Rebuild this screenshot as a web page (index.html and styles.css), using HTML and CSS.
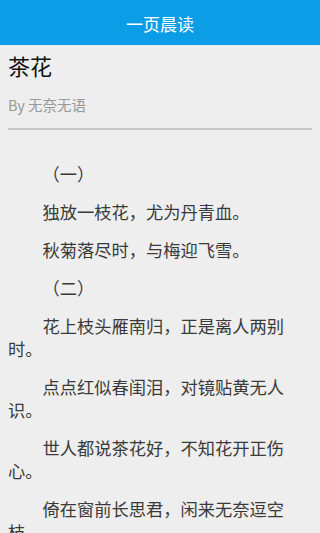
FILE: index.html
```html
<!DOCTYPE html>
<html lang="zh">
  <head>
    <meta charset="UTF-8" />
    <meta name="viewport" content="width=device-width, initial-scale=1.0" />
    <title>一页晨读</title>
    <link rel="stylesheet" href="styles.css">
  </head>
  <body>
    <header class="topbar">一页晨读</header>

    <section class="article">
      <h1 class="title">茶花</h1>
      <p class="author">By 无奈无语</p>
      <hr class="rule" />

      <div class="body">
        <p>（一）</p>
        <p>独放一枝花，尤为丹青血。</p>
        <p>秋菊落尽时，与梅迎飞雪。</p>
        <p>（二）</p>
        <p>花上枝头雁南归，正是离人两别时。</p>
        <p>点点红似春闺泪，对镜贴黄无人识。</p>
        <p>世人都说茶花好，不知花开正伤心。</p>
        <p>倚在窗前长思君，闲来无奈逗空枝。</p>
      </div>
    </section>
  </body>
</html>
```

FILE: styles.css
```css
body {
  margin: 0;
  background: #eeeeee;
  font-family: "Noto Sans CJK SC", "Noto Sans", sans-serif;
}

.topbar {
  box-sizing: border-box;
  height: 45px;
  padding-top: 3px;
  line-height: 42px;
  background: #0b9de6;
  color: #fff;
  text-align: center;
  font-size: 17px;
}

.article {
  padding: 0 8px;
}

.title {
  margin: 0;
  padding-top: 5px;
  font-size: 22px;
  font-weight: normal;
  line-height: 30px;
  color: #111;
}

.author {
  margin: 15px 0 0;
  font-size: 14.5px;
  line-height: 20px;
  color: #999;
}

.rule {
  margin: 13px 0 0;
  border: 0;
  height: 2px;
  background: #c6c6c6;
}

.body {
  padding: 32px 24px 0 0;
  color: #3a3a3a;
  font-size: 17.25px;
}

.body p {
  margin: 0 0 15px;
  line-height: 23px;
  text-indent: 2em;
}
```
